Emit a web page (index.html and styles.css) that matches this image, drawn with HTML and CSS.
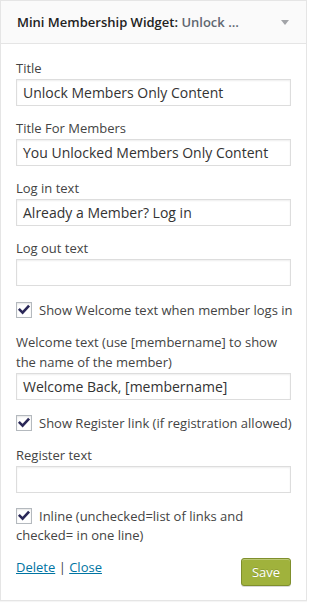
FILE: index.html
```html
<!DOCTYPE html>
<html lang="en">
<head>
<meta charset="utf-8">
<title>Mini Membership Widget</title>
<link rel="stylesheet" href="styles.css">
</head>
<body>
<div class="widget">
  <div class="widget-top">
    <h4 class="widget-title">Mini Membership Widget:<span class="in-title"> Unlock …</span></h4>
    <span class="toggle"></span>
  </div>
  <div class="widget-inside">
    <div class="field first">
      <label class="lbl">Title</label>
      <div class="input">Unlock Members Only Content</div>
    </div>
    <div class="field">
      <label class="lbl">Title For Members</label>
      <div class="input">You Unlocked Members Only Content</div>
    </div>
    <div class="field">
      <label class="lbl">Log in text</label>
      <div class="input">Already a Member? Log in</div>
    </div>
    <div class="field">
      <label class="lbl">Log out text</label>
      <div class="input"></div>
    </div>
    <div class="check-row nowrap row-welcome">
      <span class="cb"><svg viewBox="0 0 16 16" width="16" height="16"><path d="M3.8 7.8 L6.6 10.6 L12.2 4.6" fill="none" stroke="#2a2858" stroke-width="2.6" stroke-linecap="square"/></svg></span><span>Show Welcome text when member logs in</span>
    </div>
    <div class="field welcome">
      <label class="lbl">Welcome text (use [membername] to show the name of the member)</label>
      <div class="input">Welcome Back, [membername]</div>
    </div>
    <div class="check-row nowrap row-register">
      <span class="cb"><svg viewBox="0 0 16 16" width="16" height="16"><path d="M3.8 7.8 L6.6 10.6 L12.2 4.6" fill="none" stroke="#2a2858" stroke-width="2.6" stroke-linecap="square"/></svg></span><span>Show Register link (if registration allowed)</span>
    </div>
    <div class="field register">
      <label class="lbl">Register text</label>
      <div class="input"></div>
    </div>
    <div class="check-row wrap row-inline">
      <span class="cb"><svg viewBox="0 0 16 16" width="16" height="16"><path d="M3.8 7.8 L6.6 10.6 L12.2 4.6" fill="none" stroke="#2a2858" stroke-width="2.6" stroke-linecap="square"/></svg></span>Inline (unchecked=list of links and checked= in one line)
    </div>
    <div class="actions">
      <div class="links"><a href="#">Delete</a> | <a href="#">Close</a></div>
      <button class="save" type="button">Save</button>
    </div>
  </div>
</div>
</body>
</html>
```
FILE: styles.css
```css
html, body {
  margin: 0;
  padding: 0;
  background: #ffffff;
}

body {
  font-family: "Open Sans", "Liberation Sans", sans-serif;
  font-size: 13px;
  color: #444;
  width: 307px;
  height: 604px;
  overflow: hidden;
}

.widget {
  width: 307px;
  box-sizing: border-box;
  border: 1px solid #e5e5e5;
  background: #fff;
  box-shadow: 0 1px 1px rgba(0, 0, 0, 0.04);
}

.widget-top {
  height: 42px;
  background: #fafafa;
  border-bottom: 1px solid #e5e5e5;
  display: flex;
  align-items: center;
  padding: 0 17px 0 16px;
}

.widget-title {
  margin: 0;
  font-size: 13px;
  font-weight: 600;
  line-height: 20px;
  color: #222;
  white-space: nowrap;
  flex: 1;
}

.in-title {
  color: #5f6770;
}

.toggle {
  width: 0;
  height: 0;
  border-left: 4px solid transparent;
  border-right: 4px solid transparent;
  border-top: 5px solid #a2a4a8;
  margin-top: 1px;
}

.widget-inside {
  padding: 0 15px 14px 15px;
}

.field {
  margin-top: 11px;
}

.field.first {
  margin-top: 14px;
}

.lbl {
  display: block;
  line-height: 20px;
  color: #444;
}

.input {
  margin-top: 1px;
  height: 27px;
  box-sizing: border-box;
  border: 1px solid #ddd;
  box-shadow: inset 0 1px 2px rgba(0, 0, 0, 0.07);
  background: #fff;
  padding: 0 6px;
  font-size: 14px;
  line-height: 25px;
  color: #333;
  white-space: nowrap;
  overflow: hidden;
}

.field + .field {
  margin-top: 12px;
}

.check-row {
  line-height: 20px;
  color: #444;
}

.check-row.nowrap {
  display: flex;
  align-items: center;
  white-space: nowrap;
}

.row-welcome {
  margin-top: 14px;
}

.field.welcome {
  margin-top: 12px;
}

.row-register {
  margin-top: 13px;
}

.field.register {
  margin-top: 12px;
}

.row-inline {
  margin-top: 14px;
  line-height: 19px;
}

.cb {
  display: inline-block;
  width: 16px;
  height: 16px;
  box-sizing: border-box;
  border: 1px solid #b4b9be;
  background: #fff;
  box-shadow: inset 0 1px 2px rgba(0, 0, 0, 0.1);
  margin-right: 7px;
  flex: none;
  position: relative;
}

.cb svg {
  position: absolute;
  left: -1px;
  top: -1px;
}

.row-inline .cb {
  vertical-align: -3px;
}

.actions {
  margin-top: 12px;
  display: flex;
  justify-content: space-between;
  align-items: flex-start;
}

.links {
  line-height: 20px;
  color: #444;
}

.links a {
  color: #0074a2;
  text-decoration: underline;
}

.save {
  margin-top: 1px;
  width: 50px;
  height: 28px;
  box-sizing: border-box;
  padding: 0;
  border: 1px solid #7f8f2c;
  border-radius: 3px;
  background: #a0b23c;
  box-shadow: inset 0 1px 0 rgba(255, 255, 255, 0.3), 0 1px 0 rgba(0, 0, 0, 0.15);
  color: #fff;
  font-family: "Open Sans", "Liberation Sans", sans-serif;
  font-size: 13px;
  line-height: 26px;
  text-shadow: 0 -1px 0 rgba(0, 0, 0, 0.15);
}
```
